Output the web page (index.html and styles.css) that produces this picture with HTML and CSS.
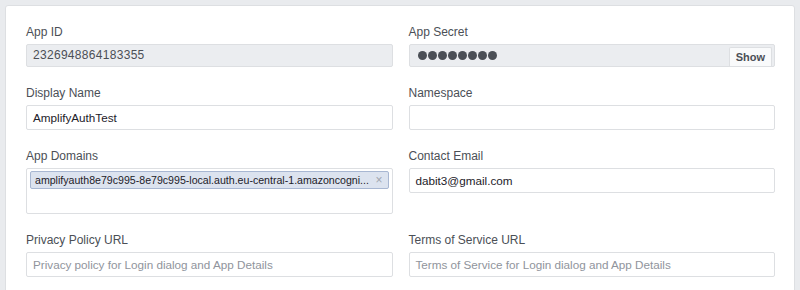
FILE: index.html
```html
<!DOCTYPE html>
<html lang="en">
<head>
    <meta charset="UTF-8">
    <meta name="viewport" content="width=device-width, initial-scale=1.0">
    <title>Basic Settings</title>
    <link rel="stylesheet" href="styles.css">
</head>
<body>
<div class="card">
    <div class="fields">
        <!-- Row 1 -->
        <div class="field">
            <label>App ID</label>
            <div class="input readonly">2326948864183355</div>
        </div>
        <div class="field">
            <label>App Secret</label>
            <div class="input readonly secret">
                <span class="dots"><i></i><i></i><i></i><i></i><i></i><i></i><i></i><i></i></span>
                <button class="show">Show</button>
            </div>
        </div>

        <!-- Row 2 -->
        <div class="field">
            <label>Display Name</label>
            <div class="input">AmplifyAuthTest</div>
        </div>
        <div class="field">
            <label>Namespace</label>
            <div class="input"></div>
        </div>

        <!-- Row 3 -->
        <div class="field">
            <label>App Domains</label>
            <div class="input tokens">
                <span class="token"><span class="token-text">amplifyauth8e79c995-8e79c995-local.auth.eu-central-1.amazoncogni...</span><span class="remove">×</span></span>
            </div>
        </div>
        <div class="field">
            <label>Contact Email</label>
            <div class="input">dabit3@gmail.com</div>
        </div>

        <!-- Row 4 -->
        <div class="field">
            <label>Privacy Policy URL</label>
            <div class="input placeholder">Privacy policy for Login dialog and App Details</div>
        </div>
        <div class="field">
            <label>Terms of Service URL</label>
            <div class="input placeholder">Terms of Service for Login dialog and App Details</div>
        </div>
    </div>
</div>
</body>
</html>
```

FILE: styles.css
```css
/* Общие стили */
body {
    font-family: 'Liberation Sans', Arial, sans-serif;
    margin: 0;
    padding: 5px 5px 0 5px;
    background: #e9ebee;
    color: #1d2129;
}

.card {
    background: #fff;
    border: 1px solid #dddfe2;
    border-radius: 3px;
    padding: 18px 19px 30px 20px;
}

.fields {
    display: grid;
    grid-template-columns: minmax(0, 1fr) minmax(0, 1fr);
    column-gap: 16px;
    row-gap: 18px;
}

.field label {
    display: block;
    font-size: 12px;
    line-height: 16px;
    color: #4b4f56;
    margin-bottom: 4px;
}

/* Поля ввода */
.input {
    box-sizing: border-box;
    height: 25px;
    border: 1px solid #dddfe2;
    border-radius: 2px;
    background: #fff;
    font-size: 11.7px;
    line-height: 23px;
    padding: 0 6px;
    color: #1d2129;
}

.input.readonly {
    height: 23px;
    line-height: 21px;
    background: #ebedf0;
    color: #4b4f56;
    font-size: 12px;
    letter-spacing: 0.3px;
}

.input.placeholder {
    color: #90949c;
}

/* Секрет приложения */
.secret {
    display: flex;
    justify-content: space-between;
    align-items: flex-end;
    padding-left: 8px;
    padding-right: 2px;
}

.dots {
    display: flex;
    gap: 1px;
    align-self: center;
}

.dots i {
    width: 9px;
    height: 9px;
    border-radius: 50%;
    background: #4b4f56;
}

.show {
    font-family: inherit;
    font-size: 11px;
    font-weight: bold;
    color: #4b4f56;
    background: #f9fafb;
    border: 1px solid #dddfe2;
    border-bottom: none;
    border-radius: 2px 2px 0 0;
    height: 19px;
    padding: 0 6px;
    cursor: pointer;
}

/* Домены */
.tokens {
    height: 46px;
    padding: 2px 3px;
    line-height: normal;
}

.token {
    display: flex;
    align-items: center;
    justify-content: space-between;
    gap: 6px;
    box-sizing: border-box;
    height: 18px;
    padding: 0 5px 0 4px;
    background: #dce3ef;
    border: 1px solid #a8b7d2;
    border-radius: 2px;
    font-size: 10.6px;
    color: #1d2129;
    white-space: nowrap;
}

.token-text {
    min-width: 0;
    overflow: hidden;
}

.remove {
    color: #a0a6b0;
    font-size: 12px;
}
```
